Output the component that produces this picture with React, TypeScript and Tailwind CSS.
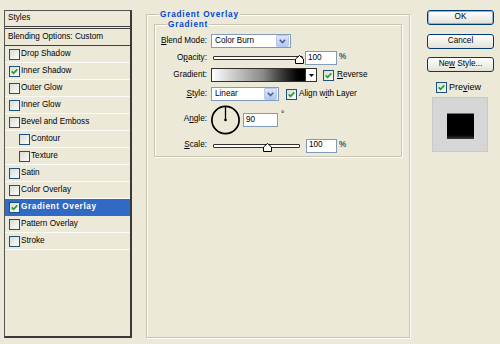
import React from "react";

function Check({ checked = false }: { checked?: boolean }) {
  return (
    <span className="flex h-[11px] w-[11px] shrink-0 items-center justify-center border border-[#1c5180] bg-gradient-to-br from-[#dcdcd5] to-[#fbfbf9]">
      {checked && (
        <svg width="7" height="7" viewBox="0 0 7 7">
          <path d="M0.7 3.3 L2.6 5.3 L6.3 1.3" stroke="#21a121" strokeWidth="1.7" fill="none" />
        </svg>
      )}
    </span>
  );
}

function U({ children }: { children: React.ReactNode }) {
  return <span className="underline underline-offset-[1px]">{children}</span>;
}

function Chevron() {
  return (
    <svg width="7" height="5" viewBox="0 0 7 5">
      <path d="M0.8 0.8 L3.5 3.5 L6.2 0.8" stroke="#4d6185" strokeWidth="1.6" fill="none" />
    </svg>
  );
}

function Select({ value, w }: { value: string; w: string }) {
  return (
    <div className={"flex h-[14px] items-center border border-[#7f9db9] bg-white " + w}>
      <span className="flex-1 pl-[3px]">{value}</span>
      <span className="mr-px flex h-[12px] w-[13px] items-center justify-center rounded-[1px] border border-[#b9c9ef] bg-gradient-to-b from-[#dbe5fb] to-[#b5c8f3]">
        <Chevron />
      </span>
    </div>
  );
}

function Thumb() {
  return (
    <svg width="9" height="9" viewBox="0 0 9 9">
      <path d="M0.5 8.5 L0.5 4 L4.5 0.5 L8.5 4 L8.5 8.5 Z" fill="#fffef6" stroke="#000" strokeWidth="1" />
    </svg>
  );
}

function Field({ value, w }: { value: string; w: string }) {
  return (
    <div className={"flex h-[14px] items-center border border-[#7f9db9] bg-white pl-[2px] " + w}>
      {value}
    </div>
  );
}

function Btn({ children, def = false }: { children: React.ReactNode; def?: boolean }) {
  return (
    <div
      className={
        def
          ? "flex h-[15px] w-[67px] items-center justify-center rounded-[3px] border border-[#003c74] bg-gradient-to-b from-white to-[#e3e1d6] shadow-[inset_0_0_0_1px_#8fb0e0]"
          : "flex h-[15px] w-[67px] items-center justify-center rounded-[3px] border border-[#003c74] bg-gradient-to-b from-white to-[#e3e1d6]"
      }
    >
      {children}
    </div>
  );
}

const rows: { label: string; checked?: boolean; indent?: boolean; selected?: boolean }[] = [
  { label: "Drop Shadow" },
  { label: "Inner Shadow", checked: true },
  { label: "Outer Glow" },
  { label: "Inner Glow" },
  { label: "Bevel and Emboss" },
  { label: "Contour", indent: true },
  { label: "Texture", indent: true },
  { label: "Satin" },
  { label: "Color Overlay" },
  { label: "Gradient Overlay", checked: true, selected: true },
  { label: "Pattern Overlay" },
  { label: "Stroke" },
];

export default function App() {
  return (
    <div className="flex h-[344px] w-[500px] items-start bg-[#ece9d8] font-['Liberation_Sans',Arial,sans-serif] text-[8.2px] leading-none text-black">
      {/* Styles list */}
      <div className="ml-[4px] mt-[10px] flex h-[328px] w-[128px] flex-col border-l border-t border-r-2 border-b-2 border-l-[#555] border-t-[#555] border-r-[#3a3a3a] border-b-[#3a3a3a]">
        <div className="flex h-[16px] items-center border-b border-[#404040] pl-[3px]">Styles</div>
        <div className="h-[2px] border-b border-[#404040]"></div>
        <div className="flex h-[17px] items-center border-b border-[#404040] pl-[3px]">Blending Options: Custom</div>
        {rows.map((r) => (
          <div
            key={r.label}
            className={
              r.selected
                ? "flex h-[17px] items-center border-b border-[#316ac5] bg-[#316ac5] font-bold tracking-[0.6px] text-white"
                : "flex h-[17px] items-center border-b border-[#fbfbf6]"
            }
          >
            <div className={r.indent ? "flex items-center pl-[14px]" : "flex items-center pl-[4px]"}>
              <Check checked={r.checked} />
              <span className="ml-[1px]">{r.label}</span>
            </div>
          </div>
        ))}
      </div>

      {/* Gradient Overlay group */}
      <div className="ml-[14px] mt-[14px] flex h-[324px] w-[264px] flex-col border border-[#c7c5b2] shadow-[inset_1px_1px_0_#fff,1px_1px_0_#fff]">
        <span className="-mt-[6px] ml-[12px] w-fit bg-[#ece9d8] px-[1px] font-bold leading-[11px] tracking-[0.8px] text-[#0046d5]">
          Gradient Overlay
        </span>
        <div className="ml-[7px] mt-[4px] flex h-[133px] w-[248px] flex-col border border-[#c7c5b2] shadow-[inset_1px_1px_0_#fff,1px_1px_0_#fff]">
          <span className="-mt-[6px] ml-[12px] w-fit bg-[#ece9d8] px-[1px] font-bold leading-[11px] tracking-[0.8px] text-[#0046d5]">
            Gradient
          </span>

          {/* Blend Mode */}
          <div className="mt-[4px] flex h-[14px] items-center">
            <div className="w-[52px] text-right">
              <U>B</U>lend Mode:
            </div>
            <div className="ml-[4px]">
              <Select value="Color Burn" w="w-[80px]" />
            </div>
          </div>

          {/* Opacity */}
          <div className="mt-[3px] flex h-[14px] items-center">
            <div className="w-[52px] text-right">
              O<U>p</U>acity:
            </div>
            <div className="relative ml-[6px] h-[4px] w-[90px] rounded-[1px] border border-[#303030] bg-[#fdfcf2]">
              <div className="absolute -top-[2px] right-[-2px]">
                <Thumb />
              </div>
            </div>
            <div className="ml-[2px]">
              <Field value="100" w="w-[32px]" />
            </div>
            <span className="ml-[2px] self-start pt-[2px]">%</span>
          </div>

          {/* Gradient */}
          <div className="mt-[3px] flex h-[14px] items-center">
            <div className="w-[52px] text-right">Gradient:</div>
            <div className="ml-[4px] h-[14px] w-[95px] border border-[#303030] bg-gradient-to-r from-white via-[#8a8a8a] via-[55%] to-black"></div>
            <div className="flex h-[14px] w-[11px] items-center justify-center border border-l-0 border-[#303030] bg-white">
              <svg width="5" height="3" viewBox="0 0 5 3">
                <path d="M0 0 L5 0 L2.5 3 Z" fill="#000" />
              </svg>
            </div>
            <div className="ml-[6px]">
              <Check checked />
            </div>
            <span className="ml-[3px]">
              <U>R</U>everse
            </span>
          </div>

          {/* Style */}
          <div className="mt-[5px] flex h-[14px] items-center">
            <div className="w-[52px] text-right">
              <U>S</U>tyle:
            </div>
            <div className="ml-[4px]">
              <Select value="Linear" w="w-[68px]" />
            </div>
            <div className="ml-[7px]">
              <Check checked />
            </div>
            <span className="ml-[2px]">
              Align w<U>i</U>th Layer
            </span>
          </div>

          {/* Angle */}
          <div className="mt-[4px] flex h-[30px] items-center">
            <div className="w-[52px] -translate-y-[1px] text-right">
              A<U>n</U>gle:
            </div>
            <svg className="ml-[3px]" width="31" height="30" viewBox="0 0 31 30">
              <circle cx="15.5" cy="15" r="13.6" fill="none" stroke="#000" strokeWidth="1.7" />
              <line x1="15.5" y1="15" x2="15.5" y2="2" stroke="#000" strokeWidth="1.3" />
              <circle cx="15.5" cy="15" r="1.3" fill="#000" />
            </svg>
            <div className="ml-[2px]">
              <Field value="90" w="w-[35px]" />
            </div>
            <span className="ml-[3px] self-start pt-[6px]">°</span>
          </div>

          {/* Scale */}
          <div className="mt-[4px] flex h-[13px] items-center">
            <div className="w-[52px] text-right">
              <U>S</U>cale:
            </div>
            <div className="relative ml-[6px] h-[4px] w-[87px] rounded-[1px] border border-[#303030] bg-[#fdfcf2]">
              <div className="absolute -top-[2px] left-[49px]">
                <Thumb />
              </div>
            </div>
            <div className="ml-[6px]">
              <Field value="100" w="w-[31px]" />
            </div>
            <span className="ml-[2px] self-start pt-[2px]">%</span>
          </div>
        </div>
      </div>

      {/* Buttons */}
      <div className="ml-[17px] mt-[10px] flex w-[67px] flex-col">
        <Btn def>OK</Btn>
        <div className="mt-[9px]">
          <Btn>Cancel</Btn>
        </div>
        <div className="mt-[8px]">
          <Btn>
            <span>
              Ne<U>w</U> Style...
            </span>
          </Btn>
        </div>
        <div className="ml-[9px] mt-[9px] flex h-[12px] items-center">
          <Check checked />
          <span className="ml-[2px] text-[9px]">
            Pre<U>v</U>iew
          </span>
        </div>
        <div className="ml-[5px] mt-[4px] flex h-[55px] w-[56px] items-center justify-center border border-[#c9c9c9] bg-[#d6d6d6] pt-[2px]">
          <div className="h-[26px] w-[27px] border-t border-[#e8481c] bg-gradient-to-b from-black via-black via-[78%] to-[#3d3d3d]"></div>
        </div>
      </div>
    </div>
  );
}
